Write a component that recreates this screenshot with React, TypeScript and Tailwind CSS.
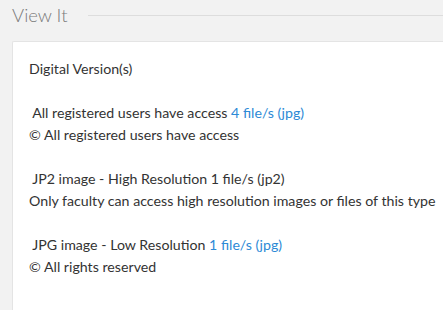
export default function App() {
  return (
    <div className="min-h-[310px] w-[443px] overflow-hidden bg-[#f2f2f2] pl-3 pt-[2px] font-['Lato','Noto_Sans',sans-serif]">
      <div className="flex items-center gap-5">
        <h2 className="text-[18.5px] font-light leading-[26px] text-[#7a7a7a]">View It</h2>
        <div className="h-px flex-1 bg-[#ddd]" />
      </div>
      <div className="mt-[13px] h-[280px] rounded-tl-[2px] border-l border-t border-[#e4e4e4] bg-white pl-4 pt-[16px] text-[14.2px] leading-[22px] text-[#333]">
        <p>Digital Version(s)</p>
        <p>&nbsp;</p>
        <p>
          &nbsp;All registered users have access{' '}
          <a className="text-[#2d8ad6]" href="#">4 file/s (jpg)</a>
        </p>
        <p>© All registered users have access</p>
        <p>&nbsp;</p>
        <p>&nbsp;JP2 image - High Resolution 1 file/s (jp2)</p>
        <p>Only faculty can access high resolution images or files of this type</p>
        <p>&nbsp;</p>
        <p>
          &nbsp;JPG image - Low Resolution{' '}
          <a className="text-[#2d8ad6]" href="#">1 file/s (jpg)</a>
        </p>
        <p>© All rights reserved</p>
      </div>
    </div>
  )
}
